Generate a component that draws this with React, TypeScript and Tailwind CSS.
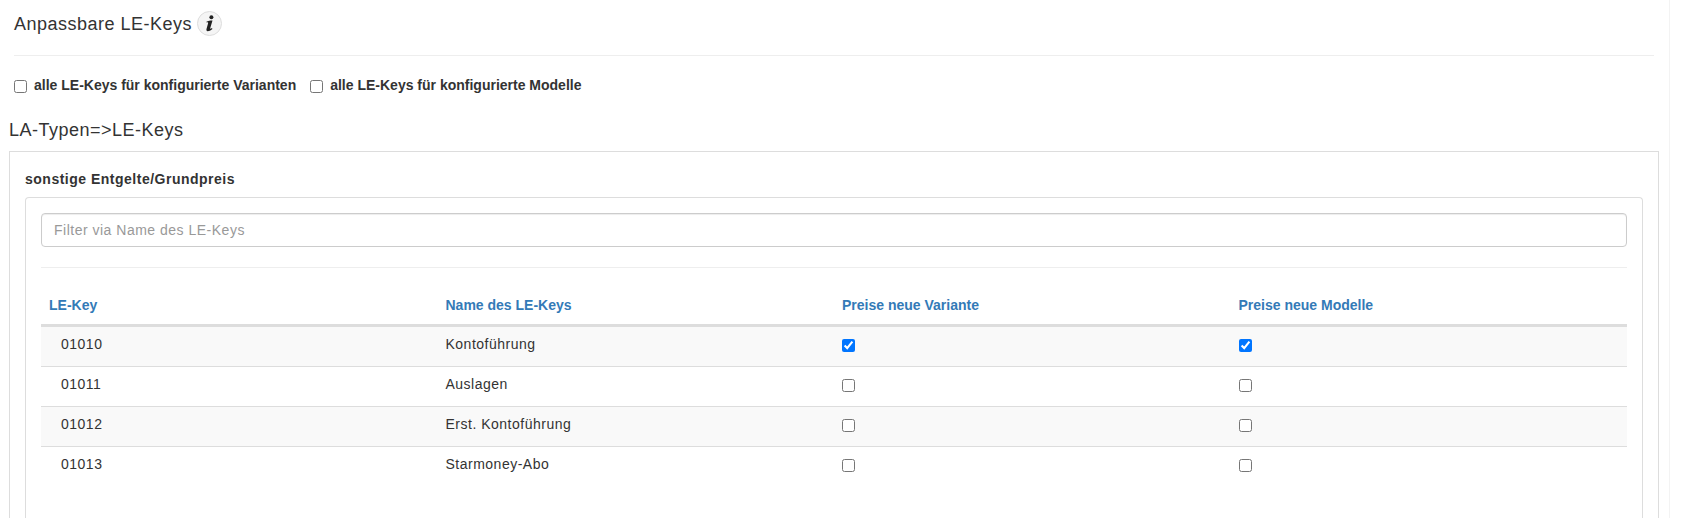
const rows = [
  { key: "01010", name: "Kontoführung", variant: true, model: true },
  { key: "01011", name: "Auslagen", variant: false, model: false },
  { key: "01012", name: "Erst. Kontoführung", variant: false, model: false },
  { key: "01013", name: "Starmoney-Abo", variant: false, model: false },
];

const headers = ["LE-Key", "Name des LE-Keys", "Preise neue Variante", "Preise neue Modelle"];

const InfoIcon = () => (
  <svg viewBox="0 0 10 17" className="h-[17px] w-[10px] fill-[#222]">
    <ellipse cx="6.4" cy="2.2" rx="2" ry="2" />
    <path d="M1.4 6.8C3 6 5 5.7 7.5 5.6L5.2 13.2C5.1 13.9 5.6 14 7 13.1L7.4 14C5.5 15.6 4 16.2 2.8 16.2C1.5 16.2 1.2 15.3 1.5 14.1L3.1 8.2C3.3 7.4 2.8 7.2 1.6 7.5Z" />
  </svg>
);

const App = () => {
  return (
    <div className="h-[518px] w-[1670px] overflow-hidden border-r border-[#f3f3f3] bg-white font-['Liberation_Sans',Arial,sans-serif] text-sm tracking-[0.5px] text-[#333]">
      <div className="w-[1659px] pl-[9px]">
        <div className="mx-[5px] border-b border-[#eee] pb-[17px] pt-[9px]">
          <div className="flex h-[29px] items-center gap-[5px] text-lg font-normal">
            <span>Anpassbare LE-Keys</span>
            <span className="flex h-[25px] w-[25px] items-center justify-center rounded-full border border-[#ddd] bg-[#f5f5f5]">
              <InfoIcon />
            </span>
          </div>
        </div>

        <div className="mt-[19px] ml-[5px] flex h-5 items-center gap-[14px] font-bold tracking-normal">
          <label className="flex items-center gap-[7px]">
            <input type="checkbox" className="m-0 mt-[2px]" />
            alle LE-Keys für konfigurierte Varianten
          </label>
          <label className="flex items-center gap-[7px]">
            <input type="checkbox" className="m-0 mt-[2px]" />
            alle LE-Keys für konfigurierte Modelle
          </label>
        </div>

        <h3 className="mt-[22px] h-[26px] text-lg font-normal leading-[26px]">LA-Typen=&gt;LE-Keys</h3>

        <div className="mt-[8px] h-[400px] border border-b-0 border-[#ddd] px-[15px] pt-[17px]">
          <h4 className="h-5 font-bold leading-5">sonstige Entgelte/Grundpreis</h4>
          <div className="mt-[8px] h-[400px] rounded-t border border-b-0 border-[#ddd] px-[15px] pt-[15px]">
            <input
              type="text"
              placeholder="Filter via Name des LE-Keys"
              className="block h-[34px] w-full rounded border border-[#ccc] bg-white px-3 text-sm tracking-[0.5px] text-[#555] shadow-[inset_0_1px_1px_rgba(0,0,0,0.075)] outline-none placeholder:text-[#999]"
            />
            <hr className="mt-5 border-t border-[#eee]" />

            <table className="mt-[20px] w-full table-fixed border-collapse">
              <thead>
                <tr className="h-[37px] border-b-[3px] border-[#ddd]">
                  {headers.map((header) => (
                    <th key={header} className="px-2 pb-[2px] text-left font-bold tracking-normal text-[#337ab7]">
                      {header}
                    </th>
                  ))}
                </tr>
              </thead>
              <tbody>
                {rows.map((row, index) => (
                  <tr
                    key={row.key}
                    className={index % 2 === 0 ? "border-b border-[#ddd] bg-[#f9f9f9] first:h-[41px] h-10" : "h-10 border-b border-[#ddd] last:border-b-0"}
                  >
                    <td className="pb-[4px] pl-5 pr-2">{row.key}</td>
                    <td className="pb-[4px] px-2">{row.name}</td>
                    <td className="px-2 pb-[2px]">
                      <input type="checkbox" defaultChecked={row.variant} className="m-0 block" />
                    </td>
                    <td className="px-2 pb-[2px]">
                      <input type="checkbox" defaultChecked={row.model} className="m-0 block" />
                    </td>
                  </tr>
                ))}
              </tbody>
            </table>
          </div>
        </div>
      </div>
    </div>
  );
};

export default App;
